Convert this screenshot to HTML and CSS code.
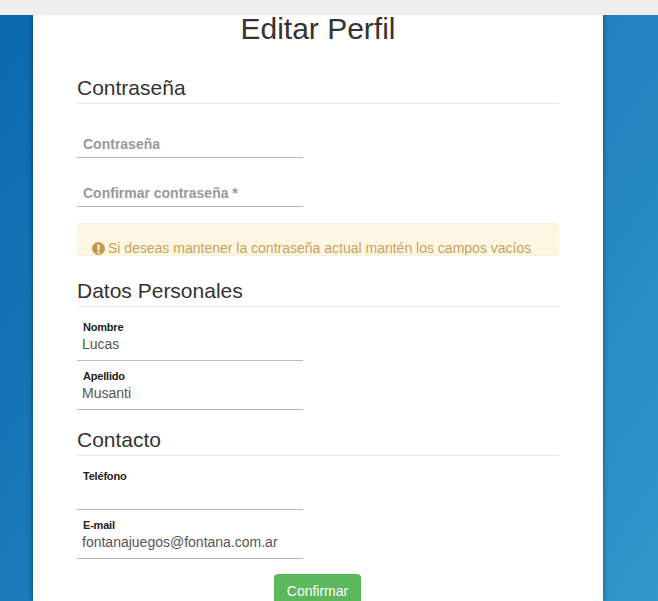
FILE: index.html
```html
<!DOCTYPE html>
<html lang="en">
<head>
    <meta charset="UTF-8">
    <meta name="viewport" content="width=device-width, initial-scale=1.0">
    <title>Editar Perfil</title>
    <link rel="stylesheet" href="styles.css">
</head>
<body>
    <div class="top-bar"></div>
    <div class="page">
        <form class="card">
            <h1>Editar Perfil</h1>

            <h2 class="section-first">Contraseña</h2>
            <div class="fields">
                <div class="field field-empty"><input type="password" placeholder="Contraseña"></div>
                <div class="field field-empty"><input type="password" placeholder="Confirmar contraseña *"></div>
            </div>
            <div class="alert">
                <svg class="alert-icon" viewBox="1.5 1 13 13" aria-hidden="true">
                    <path fill-rule="evenodd" d="M8 1a6.5 6.5 0 1 0 0 13A6.5 6.5 0 0 0 8 1zM6.900 3.600h2.200l-.2 6H7.100zM6.900 10.500h2.200v2H6.900z"/>
                </svg>
                Si deseas mantener la contraseña actual mantén los campos vacíos
            </div>

            <h2 class="section-after-alert">Datos Personales</h2>
            <div class="fields">
                <div class="field"><label>Nombre</label><input type="text" value="Lucas"></div>
                <div class="field"><label>Apellido</label><input type="text" value="Musanti"></div>
            </div>

            <h2>Contacto</h2>
            <div class="fields">
                <div class="field"><label>Teléfono</label><input type="text"></div>
                <div class="field"><label>E-mail</label><input type="text" value="fontanajuegos@fontana.com.ar"></div>
            </div>

            <div class="actions">
                <button type="button" class="confirm">Confirmar</button>
            </div>
        </form>
    </div>
</body>
</html>
```

FILE: styles.css
```css
* {
    box-sizing: border-box;
}
html, body {
    height: 100%;
}
body {
    margin: 0;
    overflow: hidden;
    font-family: "Liberation Sans", Arial, sans-serif;
    color: #333;
    display: flex;
    flex-direction: column;
}
.top-bar {
    position: relative;
    z-index: 1;
    height: 15px;
    flex: none;
    background: #efefef;
}
.page {
    flex: 1;
    min-height: 0;
    padding: 0 55px 0 33px;
    background: linear-gradient(125deg, #0b69ae 0%, #2383bf 62%, #3197c8 100%);
}
.card {
    height: 100%;
    padding: 0 44px;
    background: white;
    box-shadow: 0 0 5px rgba(0, 0, 0, 0.45);
}
h1 {
    margin: 0;
    font-size: 30px;
    font-weight: 400;
    line-height: 28px;
    text-align: center;
}
h2 {
    margin: 19px 0 5px;
    padding-bottom: 4px;
    font-size: 21px;
    font-weight: 400;
    line-height: 22px;
    border-bottom: 1px solid #e6e6e6;
}
.section-first {
    margin-top: 34px;
}
.section-after-alert {
    margin-top: 24px;
}
.fields {
    width: 226px;
}
.field {
    height: 49px;
    border-bottom: 1px solid #bbbbbb;
    padding-top: 10px;
}
.field label {
    display: block;
    margin: -1px 0 0 6px;
    font-size: 11px;
    font-weight: 700;
    letter-spacing: -0.2px;
    line-height: 13px;
    color: #222;
}
.field input {
    display: block;
    width: 100%;
    height: 19px;
    padding: 0 0 0 5px;
    border: 0;
    outline: 0;
    background: transparent;
    font-family: inherit;
    font-size: 14px;
    color: #555;
}
.field-empty {
    padding-top: 25px;
}
.field-empty input {
    padding-left: 6px;
}
.field-empty input::placeholder {
    color: #999;
    font-size: 14px;
    font-weight: 700;
    opacity: 1;
}
.alert {
    height: 33px;
    margin-top: 16px;
    padding: 14px 14px 0;
    overflow: hidden;
    background: #fdf6e3;
    border: 1px solid #fbf0d8;
    border-radius: 4px;
    font-size: 14px;
    line-height: 20px;
    color: #c9a25e;
}
.alert-icon {
    width: 13px;
    height: 13px;
    margin-right: -1px;
    vertical-align: -2px;
    fill: #c09a55;
}
.actions {
    display: flex;
    justify-content: center;
    margin-top: 15px;
    padding-right: 1px;
}
.confirm {
    flex: none;
    width: 87px;
    height: 34px;
    padding: 0;
    border: 1px solid #55b355;
    border-radius: 4px;
    background: #5cb85c;
    color: white;
    font-family: inherit;
    font-size: 14px;
    cursor: pointer;
}
```
